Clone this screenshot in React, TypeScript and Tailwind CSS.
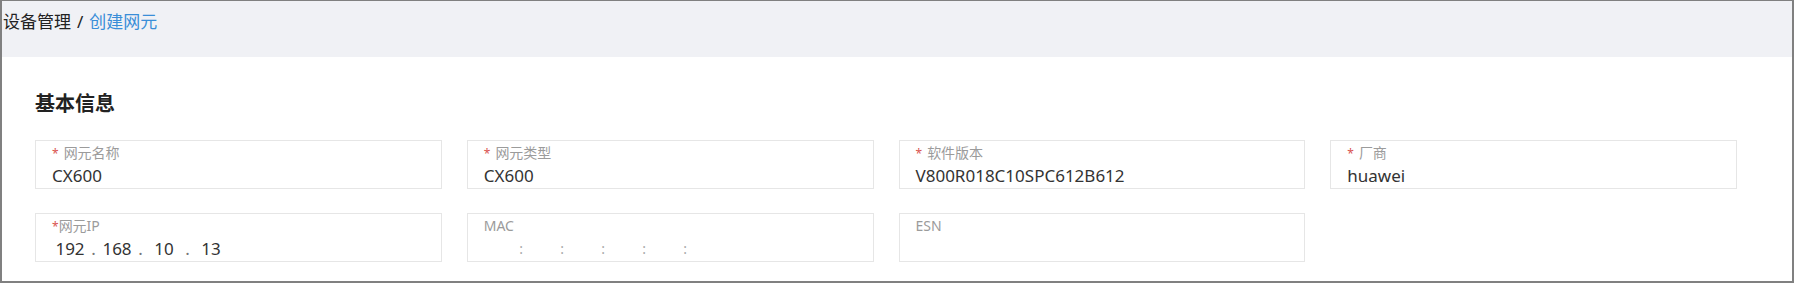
import React from 'react';

// 表单字段定义
const fields = [
  { label: '网元名称', required: true, value: 'CX600' },
  { label: '网元类型', required: true, value: 'CX600' },
  { label: '软件版本', required: true, value: 'V800R018C10SPC612B612' },
  { label: '厂商', required: true, value: 'huawei' },
];

function Box({ children }: { children: React.ReactNode }) {
  return (
    <div className="h-[49px] border border-[#e6e6e6] bg-white pl-[16px] pt-[3px]">
      {children}
    </div>
  );
}

function Label({ text, required, tight }: { text: string; required?: boolean; tight?: boolean }) {
  return (
    <div className="h-[18px] text-[14px] leading-[18px] text-[#9b9b9b]">
      {required && <span className={`text-[#d9534f] text-[12px] ${tight ? '' : 'mr-[5px]'}`}>*</span>}
      {text}
    </div>
  );
}

export default function App() {
  const ip = ['192', '168', '10', '13'];
  return (
    <div className="h-[283px] w-[1794px] border-2 border-t border-[#808080] bg-white font-['Noto_Sans','Noto_Sans_CJK_SC',sans-serif] overflow-hidden">
      {/* 面包屑 */}
      <div className="h-[56px] bg-[#f0f1f5] pl-[1px] pt-[9px] text-[17px] leading-[24px]">
        <span className="text-[#222]">设备管理</span>
        <span className="mx-[6px] text-[#222]">/</span>
        <span className="text-[#3a8ed8]">创建网元</span>
      </div>

      <div className="pl-[33px] pr-[55px] pt-[33px]">
        <h2 className="h-[28px] text-[20px] font-bold leading-[28px] text-[#222]">基本信息</h2>

        <div className="mt-[22px] grid grid-cols-4 gap-x-[25px] gap-y-[24px]">
          {fields.map((f) => (
            <Box key={f.label}>
              <Label text={f.label} required={f.required} />
              <div className="mt-[4px] text-[17px] leading-[20px] text-[#333]">{f.value}</div>
            </Box>
          ))}

          {/* 网元IP */}
          <Box>
            <Label text="网元IP" required tight />
            <div className="mt-[4px] flex text-[17px] leading-[20px] text-[#333]">
              {ip.map((seg, i) => (
                <React.Fragment key={i}>
                  <span className="w-[36px] text-center">{seg}</span>
                  {i < ip.length - 1 && <span className="w-[11px] text-center text-[#777]">.</span>}
                </React.Fragment>
              ))}
            </div>
          </Box>

          {/* MAC */}
          <Box>
            <Label text="MAC" />
            <div className="mt-[4px] flex text-[14px] leading-[20px] text-[#aaa]">
              {[0, 1, 2, 3, 4, 5].map((i) => (
                <React.Fragment key={i}>
                  <span className="w-[34px]" />
                  {i < 5 && <span className="w-[7px] text-center">:</span>}
                </React.Fragment>
              ))}
            </div>
          </Box>

          {/* ESN */}
          <Box>
            <Label text="ESN" />
          </Box>
        </div>
      </div>
    </div>
  );
}
